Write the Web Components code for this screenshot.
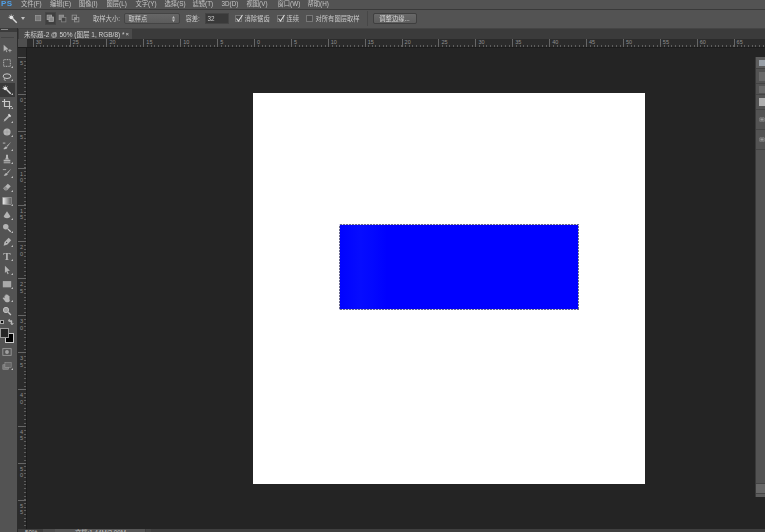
<!DOCTYPE html>
<html lang="zh"><head><meta charset="utf-8"><title>PS</title>
<style>
html,body{margin:0;padding:0;background:#242424;overflow:hidden}
body{font-family:"Noto Sans CJK SC","Liberation Sans",sans-serif;color:#c8c8c8}
</style></head><body>
<ps-app></ps-app>
<script>
const FONT='"Liberation Sans","Noto Sans CJK SC",sans-serif';
function def(name,css,html,setup){
  customElements.define(name,class extends HTMLElement{
    connectedCallback(){
      if(this.shadowRoot)return;
      const r=this.attachShadow({mode:'open'});
      r.innerHTML='<style>'+css+'</style>'+(typeof html==='function'?html(this):html);
      if(setup)setup(this,r);
    }
  });
}
const ICONS={
 move:'<path d="M2 1v8l2-2 1.500 3 1-.5L5 6.500h3z"/><path d="M9 6v1.500H7.500v1H9V10h1V8.500h1.500v-1H10V6z"/>',
 marquee:'<path d="M2 2h8v8H2z" fill="none" stroke="#c8c8c8" stroke-dasharray="1.200 .8"/>',
 lasso:'<ellipse cx="6" cy="5" rx="4.600" ry="2.800" fill="none" stroke="#c8c8c8" stroke-width="1.200"/><path d="M3 7.500c-1 1.500 0 3 1.500 2.500" fill="none" stroke="#c8c8c8"/>',
 wand:'<path d="M5.500 5.500l5 5" stroke="#d8d8d8" stroke-width="1.800"/><circle cx="4" cy="4" r="2.300" fill="#e4e4e4"/><path d="M4 .5v1M.5 4h1M7 1.500l-.8.8M1.500 1.500l.8.8" stroke="#ddd" stroke-width=".7"/>',
 crop:'<path d="M3 0v9h9M0 3h9v9" fill="none" stroke="#c8c8c8" stroke-width="1.400"/>',
 dropper:'<path d="M2 10.500l1-3 4.500-4.500 1.500 1.500L4.500 9z"/><path d="M7 2.500l1.500-1.500 2.500 2.500L9.500 5z" fill="#e2e2e2"/>',
 heal:'<circle cx="6" cy="6" r="4.300"/><path d="M1 6h10M6 1v10" stroke="#8d8d8d" stroke-width=".5"/>',
 brush:'<path d="M11 1L5.500 6l1 1z"/><path d="M5 6.500C3 6.500 3 8.500 1.500 9.500c2 .8 4.500.3 5-2z"/><path d="M1 2.500h3" stroke="#c8c8c8"/>',
 stamp:'<path d="M4.800 1h2.400v3l1 2.500h-4.400l1-2.500z"/><path d="M2 7h8v2H2zM2 10h8v1H2z"/>',
 hbrush:'<path d="M11 1L6 5.500l1 1z"/><path d="M5.500 6C3.500 6 3.500 8 2 9c2 .8 4.500.3 5-2z"/><path d="M1 1.500h4v1H1z"/>',
 eraser:'<path d="M1.500 7.500L7 2l3.500 3L6 10H3.500z"/><path d="M1.500 7.500L4 5l3 3-1.500 2H3.500z" fill="#8c8c8c"/>',
 gradient:'<defs><linearGradient id="g"><stop offset="0" stop-color="#eee"/><stop offset="1" stop-color="#555"/></linearGradient></defs><rect x="1" y="2" width="10" height="8" fill="url(#g)" stroke="#bbb" stroke-width=".6"/>',
 bucket:'<path d="M6 1.500L10 7.500C9.500 10.500 2.500 10.500 2 7.500z"/>',
 dodge:'<circle cx="4.500" cy="4.500" r="3.300"/><path d="M7 7l3.500 3.500" stroke="#c8c8c8" stroke-width="1.500"/>',
 pen:'<path d="M8 1l3 3-4.500 5L2 10.500 3 6z"/><circle cx="5.500" cy="6.500" r=".8" fill="#555"/>',
 path:'<path d="M3.500 1l6 6-3 .3 1.500 3.200-1.300.5-1.500-3.200L3.500 9.500z"/>',
 rect:'<rect x="1" y="2.500" width="10" height="7.500" fill="#aaa"/>',
 hand:'<path d="M3 6V3.500c0-.8 1-.8 1 0V2.500c0-.8 1.200-.8 1.200 0V2c0-.8 1.300-.8 1.300 0v.8c0-.8 1.300-.8 1.300 0V4c0-.7 1.200-.7 1.200 0v3.500C10 9.500 9 11 7 11H5.500C4 11 3.500 10 2.500 8.500L1 6.500c-.4-.7.5-1.300 1-.8z"/>',
 zoom:'<circle cx="4.800" cy="4.800" r="3.200" fill="#a0a0a0" stroke="#c8c8c8"/><path d="M7.500 7.500l3.200 3.200" stroke="#c8c8c8" stroke-width="1.600"/>',
 mask:'<rect x="1" y="2" width="10" height="8" fill="none" stroke="#a0a0a0"/><circle cx="6" cy="6" r="2.300" fill="#a0a0a0"/>',
 screen:'<rect x="1" y="4.500" width="7" height="5.500" fill="#7c7c7c" stroke="#a0a0a0" stroke-width=".6"/><rect x="3.500" y="2" width="7.500" height="5.500" fill="#666" stroke="#a0a0a0" stroke-width=".6"/>'
};
function ico(n){return '<svg viewBox="0 0 12 12" width="10" height="10" fill="#b4b4b4" style="display:block;filter:blur(.4px)">'+ICONS[n]+'</svg>';}

def('ps-app',
 ':host{display:grid;grid-template-rows:10px 18px minmax(0,1fr);grid-template-columns:765px;width:765px;height:532px;position:relative;overflow:hidden;background:#242424;font-family:'+FONT+'}'+
 '.body{display:grid;grid-template-columns:18px minmax(0,1fr);grid-template-rows:minmax(0,1fr);min-height:0}'+
 '.main{display:grid;grid-template-rows:11px 9px minmax(0,1fr);grid-template-columns:minmax(0,1fr);min-height:0;min-width:0}'+
 '.rr,.top{display:grid;grid-template-columns:9px minmax(0,1fr);min-height:0;min-width:0}'+
 '.corner{background:#4e4e4e;border-bottom:1px solid #1d1d1d;box-sizing:border-box}',
 '<ps-menubar></ps-menubar><ps-options></ps-options>'+
 '<div class="body"><ps-toolbar></ps-toolbar>'+
 '<div class="main"><ps-tabstrip></ps-tabstrip>'+
 '<div class="top"><div class="corner"></div><ps-hruler></ps-hruler></div>'+
 '<div class="rr"><ps-vruler></ps-vruler><ps-workspace></ps-workspace></div></div></div>'+
 '<ps-status></ps-status><ps-dock></ps-dock>');

def('ps-menubar',
 ':host{display:flex;height:10px;background:#535353;border-bottom:1px solid #3a3a3a;box-sizing:border-box;overflow:hidden;font-size:6.300px;color:#c4c4c4;align-items:flex-start;line-height:7px}'+
 '.logo{color:#4f9fe6;font-weight:700;font-size:8px;line-height:7px;width:21px;padding-left:1px;box-sizing:border-box;letter-spacing:.3px;filter:blur(.3px)}span{display:block;white-space:nowrap;filter:blur(.3px)}',
 ()=>{const m=[['文件(F)',29],['编辑(E)',29],['图像(I)',27.500],['图层(L)',29],['文字(Y)',29],['选择(S)',28],['滤镜(T)',29],['3D(D)',25],['视图(V)',31],['窗口(W)',30],['帮助(H)',30]];
  return '<div class="logo">PS</div>'+m.map(([t,w])=>`<span style="width:${w}px">${t}</span>`).join('');});

const optSvg=(i)=>{const b=['<rect x="2" y="2" width="7" height="7" fill="#777" stroke="#999"/>',
 '<rect x="1.500" y="1.500" width="6" height="6" fill="#777" stroke="#aaa"/><rect x="4" y="4" width="6" height="6" fill="#888" stroke="#aaa"/>',
 '<rect x="1.500" y="1.500" width="6" height="6" fill="#888" stroke="#999"/><rect x="4.500" y="4.500" width="6" height="6" fill="#444" stroke="#888"/>',
 '<rect x="1.500" y="1.500" width="6" height="6" fill="none" stroke="#999"/><rect x="4.500" y="4.500" width="6" height="6" fill="none" stroke="#999"/><rect x="4.500" y="4.500" width="3" height="3" fill="#999"/>'][i];
 return `<svg viewBox="0 0 12 12" width="9" height="9" style="display:block;filter:blur(.3px)">${b}</svg>`;};

def('ps-options',
 ':host{display:flex;align-items:center;height:18px;background:#535353;font-size:6.300px;color:#c8c8c8;box-sizing:border-box;white-space:nowrap;overflow:hidden;padding-bottom:1px}'+
 '.t{display:block;filter:blur(.3px)}'+
 '.sel{box-sizing:border-box;width:56px;height:11px;background:linear-gradient(#666,#5b5b5b);border:1px solid #444;border-radius:2px;display:flex;align-items:center;padding:0 4px;justify-content:space-between;color:#d0d0d0}'+
 '.inp{box-sizing:border-box;width:24px;height:11px;background:#393939;border:1px solid #444;color:#ccc;padding-left:2px;line-height:9px}'+
 '.cb{box-sizing:border-box;width:7px;height:7px;background:#4a4a4a;border:1px solid #777;display:block;position:relative}'+
 '.cb svg{position:absolute;left:-1px;top:-2px}'+
 '.mode{height:11px;display:flex;align-items:center;justify-content:center;flex:none}'+
 '.active{background:#3f3f3f;outline:1px solid #464646}'+
 '.sep{width:1px;height:15px;background:#474747}'+
 '.btn{box-sizing:border-box;width:44px;height:11px;background:linear-gradient(#686868,#5c5c5c);border:1px solid #3f3f3f;border-radius:2px;text-align:center;line-height:9px;color:#dadada}',
 ()=>{const tick='<svg viewBox="0 0 9 9" width="9" height="9"><path d="M1.500 4.500l2 2.500 4-6" fill="none" stroke="#ddd" stroke-width="1.100"/></svg>';
  return `<span style="margin-left:8px">${ico('wand')}</span>
  <svg style="margin-left:3px" width="4" height="3" viewBox="0 0 4 3"><path d="M0 0h4L2 3z" fill="#c0c0c0"/></svg>
  <span class="mode" style="margin-left:8.500px;width:9px">${optSvg(0)}</span>
  <span class="mode active" style="margin-left:3px;width:9px">${optSvg(1)}</span>
  <span class="mode" style="margin-left:3px;width:9px">${optSvg(2)}</span>
  <span class="mode" style="margin-left:4px;width:9px">${optSvg(3)}</span>
  <span class="t" style="margin-left:13.500px;width:30.500px">取样大小:</span>
  <div class="sel"><span class="t">取样点</span><svg width="3" height="6" viewBox="0 0 3 6"><path d="M0 2.500L1.500 0 3 2.500zM0 3.500L1.500 6 3 3.500z" fill="#c0c0c0"/></svg></div>
  <span class="t" style="margin-left:6px;width:19px">容差:</span>
  <div class="inp"><span class="t">32</span></div>
  <span class="cb" style="margin-left:6px">${tick}</span><span class="t" style="margin-left:3px;width:32px">消除锯齿</span>
  <span class="cb">${tick}</span><span class="t" style="margin-left:3px;width:19px">连续</span>
  <span class="cb"></span><span class="t" style="margin-left:3px;width:51px">对所有图层取样</span>
  <span class="sep"></span>
  <div class="btn" style="margin-left:5px"><span class="t">调整边缘...</span></div>`;});

def('ps-tabstrip',
 ':host{display:flex;background:#3b3b3b;height:11px;box-sizing:border-box;font-size:6.500px;border-top:1px solid #444;min-width:0;overflow:hidden}'+
 '.tab{display:flex;align-items:center;width:113px;margin-left:1px;padding-left:5px;box-sizing:border-box;background:#4b4b4b;color:#cfcfcf;white-space:nowrap;justify-content:space-between;padding-right:3px}span{filter:blur(.3px)}',
 '<div class="tab"><span>未标题-2 @ 50% (图层 1, RGB/8) *</span><span style="font-size:6px">×</span></div>');

def('ps-hruler',
 ':host{display:flex;background:#2b2b2b;height:9px;box-sizing:border-box;border-bottom:1px solid #1c1c1c;padding-left:5.700px;overflow:hidden;font-size:5.500px;color:#8f8f8f;min-width:0}'+
 'b{font-weight:400;display:block;flex:0 0 36.900px;box-sizing:border-box;border-left:1px solid #666;padding-left:2px;line-height:6px;background:repeating-linear-gradient(90deg,#5e5e5e 0 1px,transparent 1px 3.690px) 2.700px 100%/100% 2px no-repeat}',
 ()=>{let s='';for(let i=30;i>=0;i-=5)s+=`<b>${i}</b>`;for(let i=5;i<=65;i+=5)s+=`<b>${i}</b>`;return s;});

def('ps-vruler',
 ':host{display:block;background:#2b2b2b;border-right:1px solid #1c1c1c;box-sizing:border-box;overflow:hidden;padding-top:9px;font-size:5.500px;color:#8f8f8f;min-height:0}'+
 'b{font-weight:400;display:block;height:36.900px;box-sizing:border-box;border-top:1px solid #666;padding:2px 0 0 2px;line-height:6.500px;background:repeating-linear-gradient(180deg,#5e5e5e 0 1px,transparent 1px 3.690px) 100% 2.700px/2px 100% no-repeat}',
 ()=>{let s='<b>5</b>';for(let i=0;i<=55;i+=5)s+=`<b>${String(i).split('').join('<br>')}</b>`;return s;});

def('ps-workspace',':host{display:block;background:#242424;padding:45px 0 0 226px;min-height:0;min-width:0;overflow:hidden}','<ps-document></ps-document>');
def('ps-document',':host{display:block;width:391.500px;height:391px;background:#fff;box-sizing:border-box;padding:131px 0 0 85.500px}','<ps-selection></ps-selection>');
def('ps-selection',
 ':host{display:block;width:240.500px;height:86px;background:'+
 'repeating-linear-gradient(90deg,#dcdcf0 0 1.500px,#6a6a8a 1.500px 3px) 0 0/100% 1px no-repeat,'+
 'repeating-linear-gradient(90deg,#dcdcf0 0 1.500px,#6a6a8a 1.500px 3px) 0 100%/100% 1px no-repeat,'+
 'repeating-linear-gradient(0deg,#dcdcf0 0 1.500px,#6a6a8a 1.500px 3px) 0 0/1px 100% no-repeat,'+
 'repeating-linear-gradient(0deg,#dcdcf0 0 1.500px,#6a6a8a 1.500px 3px) 100% 0/1px 100% no-repeat,'+
 'linear-gradient(90deg,#0002ff 0,#060cff 9%,#0308ff 14%,#0000ff 20%)}','');

def('ps-tool',
 ':host{display:flex;align-items:center;justify-content:center;height:13.820px;width:15px;padding-right:1px;position:relative;box-sizing:border-box}'+
 ':host([active]){background:#3a3a3a}'+
 ':host([more])::after{content:"";position:absolute;right:2px;bottom:2px;border-style:solid;border-width:0 0 2px 2px;border-color:transparent transparent #bdbdbd transparent}'+
 'span{font:700 11px "Liberation Serif",serif;color:#b4b4b4;line-height:10px;filter:blur(.3px)}',
 h=>h.getAttribute('icon')==='T'?'<span>T</span>':ico(h.getAttribute('icon')));

def('ps-toolbar',
 ':host{display:flex;flex-direction:column;background:#535353;border-right:1px solid #2c2c2c;width:18px;box-sizing:border-box;min-height:0;overflow:hidden}'+
 '.head{height:14px;flex:none;background:linear-gradient(#3b3b3b 0 4px,#535353 4px);position:relative;border-bottom:0}.head i{position:absolute;left:1px;top:1px;width:7px;height:1px;background:#888}.head u{position:absolute;left:1px;right:3px;top:9px;height:1px;background:#444}'+
 '.sw{height:26.600px;flex:none;position:relative}'+
 '.fg,.bg{position:absolute;box-sizing:border-box;height:10px;border:1px solid #9a9a9a}.fg{left:0;top:10px;width:9px;background:#262626;z-index:1}.bg{left:5px;top:15px;width:9px;background:#000;border-color:#ccc}'+
 '.mini{position:absolute;left:0;top:2px;width:4px;height:4px;background:#111;border:1px solid #aaa;box-sizing:border-box}.swap{position:absolute;left:8px;top:1px}',
 ()=>{const t=(i,m,a)=>`<ps-tool icon="${i}"${m?' more':''}${a?' active':''}></ps-tool>`;
  return '<div class="head"><i></i><u></u></div>'+
  t('move')+t('marquee',1)+t('lasso',1)+t('wand',1,1)+t('crop',1)+t('dropper',1)+
  t('heal',1)+t('brush',1)+t('stamp',1)+t('hbrush',1)+t('eraser',1)+t('gradient',1)+t('bucket',1)+t('dodge',1)+
  t('pen',1)+t('T',1)+t('path',1)+t('rect',1)+t('hand',1)+t('zoom')+
  '<div class="sw"><span class="mini"></span><svg class="swap" width="6" height="6" viewBox="0 0 6 6"><path d="M1 1.500h3V5M0 1.500L1.500 0v3zM4 6L2.500 4.500h3z" fill="#bbb" stroke="#bbb" stroke-width=".4"/></svg><span class="bg"></span><span class="fg"></span></div>'+
  '<ps-tool icon="mask"></ps-tool>'+
  '<ps-tool icon="screen" more></ps-tool>';});

def('ps-status',
 ':host{position:absolute;left:18px;right:0;bottom:0;height:3px;background:#3f3f3f;overflow:hidden;display:flex;font-size:6.300px;line-height:7px;color:#c0c0c0;white-space:nowrap}'+
 '.z{width:25px;padding-left:7px;box-sizing:border-box}.i{width:12px;background:#4d4d4d}.t{width:90px;background:#565656;padding-left:20px;box-sizing:border-box}.a{width:5px;background:#474747;margin-left:1px}',
 '<div class="z">50%</div><div class="i"></div><div class="t">文档:1.44M/2.09M</div><div class="a"></div>');

def('ps-dock',
 ':host{position:absolute;left:755px;top:57px;width:10px;height:440px;background:#535353;border-left:1px solid #3a3a3a;box-sizing:border-box;display:flex;flex-direction:column;overflow:hidden}'+
 '.c{flex:none;box-sizing:border-box;border-bottom:1px solid #444;display:flex;align-items:center;padding-left:3px}'+
 '.s{width:7px;height:6px;background:#8a8a8a}.b{background:#6a6a6a;width:8px;height:9px}.e{width:7px;height:5px;border-radius:50%;background:#999;box-shadow:inset 0 0 0 1.500px #6d6d6d}'+
 '.sp{flex:1}.foot{flex:none;height:9px;background:#676767;border-top:1px solid #444;border-bottom:1px solid #444}.end{flex:none;height:3px;background:#5c5c5c}',
 '<div class="c" style="height:12px;background:#5c5c5c"><span class="s" style="background:#99a0a8"></span></div><div class="c" style="height:15px"><span class="b"></span></div><div class="c" style="height:11px"><span class="b" style="height:7px"></span></div><div class="c" style="height:15px"><span class="s" style="background:#b0b0b0;height:8px"></span></div><div class="c" style="height:20px"><span class="e"></span></div><div class="c" style="height:20px"><span class="e"></span></div><div class="sp"></div><div class="foot"></div><div class="end"></div>');
</script>
</body></html>
